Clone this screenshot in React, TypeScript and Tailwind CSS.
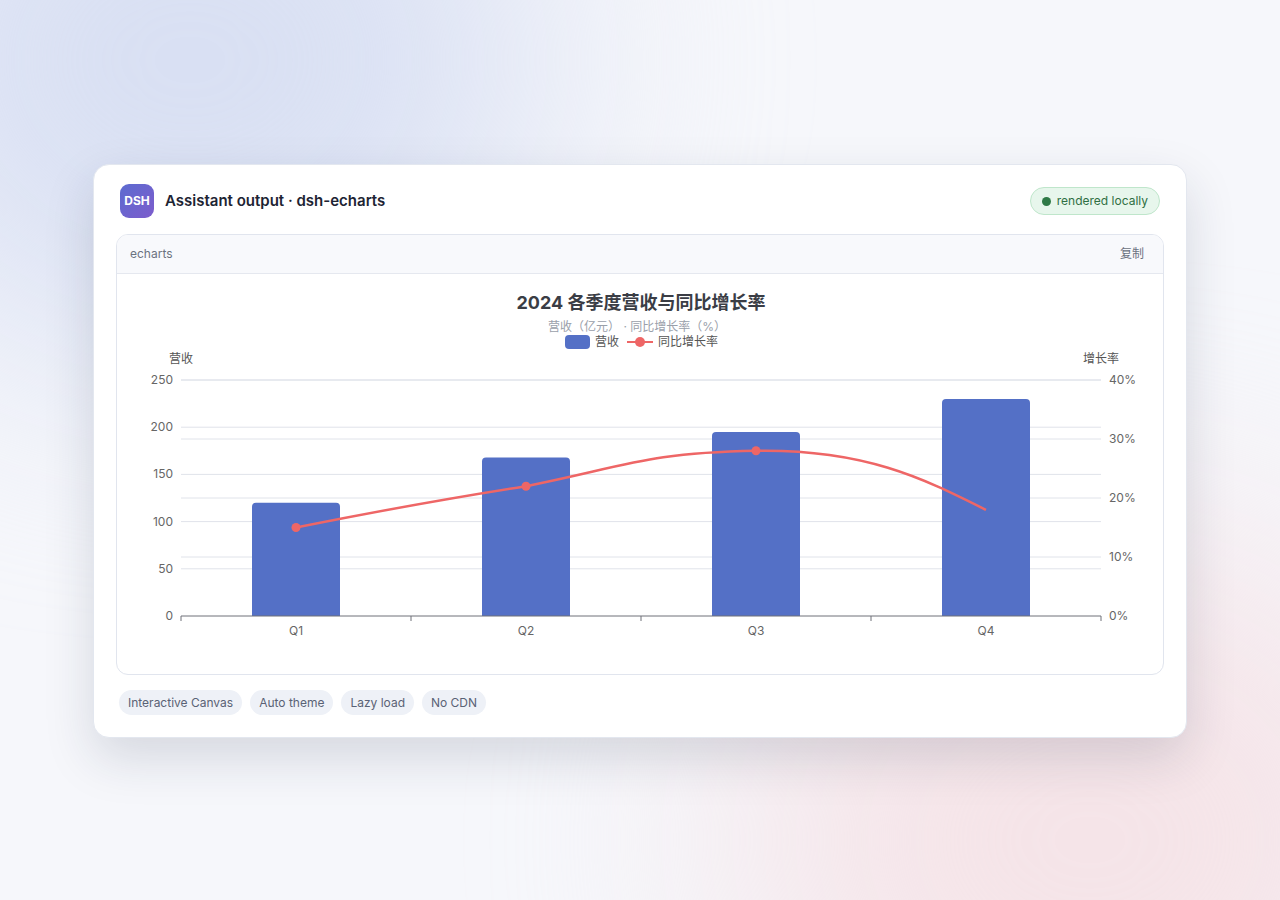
export default function App() {
  const font = '"Inter", "Noto Sans CJK SC", sans-serif'
  const leftTicks = [0, 50, 100, 150, 200, 250]
  const rightTicks = [0, 10, 20, 30, 40]
  const yL = (v: number) => 616 - (v * 236) / 250
  const yR = (v: number) => 616 - (v * 236) / 40
  const bars = [
    { q: 'Q1', x: 295, v: 120, g: 15 },
    { q: 'Q2', x: 525, v: 168, g: 22 },
    { q: 'Q3', x: 755, v: 195, g: 28 },
    { q: 'Q4', x: 985, v: 230, g: 18 },
  ]
  const p = bars.map((b) => [b.x, yR(b.g)])
  const line = `M${p[0][0]},${p[0][1]} C${p[0][0] + 90},${p[0][1] - 18} ${p[1][0] - 90},${p[1][1] + 14} ${p[1][0]},${p[1][1]} C${p[1][0] + 100},${p[1][1] - 20} ${p[2][0] - 110},${p[2][1] + 2} ${p[2][0]},${p[2][1]} C${p[2][0] + 110},${p[2][1] - 2} ${p[3][0] - 60},${p[3][1] - 30} ${p[3][0]},${p[3][1]}`
  return (
    <div
      className="relative w-full h-[900px] overflow-hidden bg-[#f6f7fb]"
      style={{ fontFamily: font }}
    >
      <div className="absolute -left-40 -top-60 w-[700px] h-[600px] rounded-full bg-[#d9e0f3] blur-[120px]" />
      <div className="absolute -right-40 -bottom-60 w-[700px] h-[600px] rounded-full bg-[#f5e4e8] blur-[120px]" />
      <div className="relative pt-[164px] px-[93px]">
        <div className="bg-white rounded-2xl border border-[#e3e7ef] shadow-[0_20px_50px_rgba(30,40,70,0.15)] px-[22px] pt-[19px] pb-[22px]">
          <div className="flex items-center justify-between pl-[4px] pr-[4px]">
            <div className="flex items-center gap-[11px]">
              <div className="w-[34px] h-[34px] rounded-[9px] bg-gradient-to-br from-[#5b6bd0] to-[#7c5ccc] text-white text-[12px] font-bold flex items-center justify-center">
                DSH
              </div>
              <div className="text-[15px] font-semibold text-[#1d2433]">Assistant output · dsh-echarts</div>
            </div>
            <div className="flex items-center gap-[6px] h-[28px] px-[11px] rounded-full bg-[#e7f6ec] border border-[#bfe6cb] text-[12px] text-[#2f6f43]">
              <span className="w-[9px] h-[9px] rounded-full bg-[#2f7a47]" />
              rendered locally
            </div>
          </div>
          <div className="mt-[16px] border border-[#e1e5ee] rounded-xl overflow-hidden">
            <div className="h-[39px] bg-[#f8f9fc] border-b border-[#e5e8ef] flex items-center justify-between px-[13px] text-[12px] text-[#6b7280]">
              <span>echarts</span>
              <span className="pr-[6px]">复制</span>
            </div>
            <svg viewBox="116 274 1048 400" width="1048" height="400" className="block" style={{ fontFamily: font }}>
              <text x="640" y="309" textAnchor="middle" fontSize="18" fontWeight="700" fill="#3a3d45">2024 各季度营收与同比增长率</text>
              <text x="636" y="331" textAnchor="middle" fontSize="12" fill="#9aa0aa">营收（亿元） · 同比增长率（%）</text>
              <rect x="564" y="335" width="25" height="14" rx="4" fill="#5470c6" />
              <text x="594" y="346" fontSize="12" fill="#555">营收</text>
              <line x1="626" y1="342" x2="652" y2="342" stroke="#ee6666" strokeWidth="2" />
              <circle cx="639" cy="342" r="5" fill="#ee6666" />
              <text x="657" y="346" fontSize="12" fill="#555">同比增长率</text>
              <text x="180" y="363" textAnchor="middle" fontSize="12" fill="#555">营收</text>
              <text x="1100" y="363" textAnchor="middle" fontSize="12" fill="#555">增长率</text>
              {leftTicks.map((t) => (
                <g key={'l' + t}>
                  {t > 0 && <line x1="180" x2="1100" y1={yL(t)} y2={yL(t)} stroke="#e0e3ea" />}
                  <text x="172" y={yL(t) + 4} textAnchor="end" fontSize="12" fill="#666">{t}</text>
                </g>
              ))}
              {rightTicks.map((t) => (
                <g key={'r' + t}>
                  {t > 0 && <line x1="180" x2="1100" y1={yR(t)} y2={yR(t)} stroke="#e0e3ea" />}
                  <text x="1108" y={yR(t) + 4} fontSize="12" fill="#666">{t}%</text>
                </g>
              ))}
              {bars.map((b) => (
                <g key={b.q}>
                  <path
                    d={`M${b.x - 44},616 V${yL(b.v) + 4} Q${b.x - 44},${yL(b.v)} ${b.x - 40},${yL(b.v)} H${b.x + 40} Q${b.x + 44},${yL(b.v)} ${b.x + 44},${yL(b.v) + 4} V616 Z`}
                    fill="#5470c6"
                  />
                  <line x1={b.x + 115} x2={b.x + 115} y1="616" y2="621" stroke="#6e7079" />
                  <text x={b.x} y="635" textAnchor="middle" fontSize="12" fill="#666">{b.q}</text>
                </g>
              ))}
              <line x1="180" x2="180" y1="616" y2="621" stroke="#6e7079" />
              <line x1="180" x2="1100" y1="616" y2="616" stroke="#6e7079" />
              <path d={line} fill="none" stroke="#ee6666" strokeWidth="2.5" />
              {p.slice(0, 3).map(([x, y]) => (
                <circle key={x} cx={x} cy={y} r="4.5" fill="#ee6666" />
              ))}
            </svg>
          </div>
          <div className="mt-[15px] flex gap-[8px] pl-[3px]">
            {['Interactive Canvas', 'Auto theme', 'Lazy load', 'No CDN'].map((t) => (
              <span key={t} className="h-[25px] px-[9px] flex items-center rounded-full bg-[#eef1f7] text-[12px] text-[#5a6275]">
                {t}
              </span>
            ))}
          </div>
        </div>
      </div>
    </div>
  )
}
